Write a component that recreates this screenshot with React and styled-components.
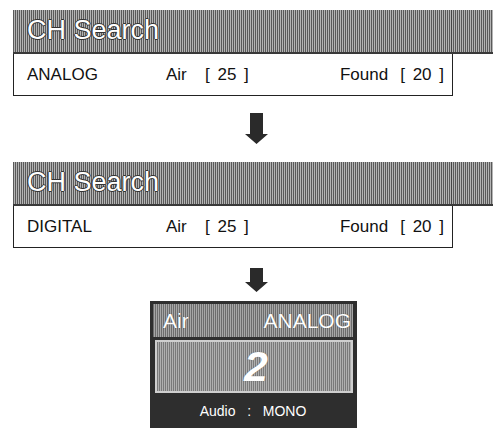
import React from 'react';
import styled, { createGlobalStyle } from 'styled-components';

const GlobalStyle = createGlobalStyle`
  html, body {
    margin: 0;
    padding: 0;
    background: #fff;
  }
  body {
    font-family: "Liberation Sans", Arial, sans-serif;
    color: #111;
  }
`;

const Page = styled.div`
  width: 493px;
  height: 428px;
  overflow: hidden;
  padding-top: 10px;
  box-sizing: border-box;
  display: flex;
  flex-direction: column;
`;

const Panel = styled.div`
  display: flex;
  flex-direction: column;
  padding-left: 13px;
`;

const Header = styled.div`
  display: flex;
  height: 42px;
  background: repeating-linear-gradient(90deg, #5a5a5a 0 1px, #b4b4b4 1px 2px);
  border-bottom: 2px solid #3a3a3a;
`;

const HeaderMain = styled.div`
  width: 439px;
  border-right: 1px solid #444;
  display: flex;
  align-items: center;
  padding-left: 14px;
  box-sizing: border-box;
`;

const HeaderTitle = styled.span`
  font-size: 27px;
  color: #fff;
  margin-top: -1px;
  text-shadow: 1px 0 0 #333, -1px 0 0 #333, 0 1px 0 #333, 0 -1px 0 #333;
`;

const Row = styled.div`
  width: 440px;
  height: 42px;
  box-sizing: border-box;
  border: 1.5px solid #222;
  border-top: none;
  display: flex;
  align-items: center;
  padding: 0 8px 0 13px;
  font-size: 17px;
  white-space: pre;
`;

const Mode = styled.span`
  width: 139px;
`;

const Label = styled.span`
  width: ${props => props.w}px;
`;

const Bracket = styled.span`
  word-spacing: 3px;
`;

const Spacer = styled.span`
  flex: 1;
`;

const Found = styled.span`
  margin-right: 12px;
`;

const ArrowRow = styled.div`
  display: flex;
  padding-left: 245px;
  margin-top: ${props => props.top}px;
  margin-bottom: ${props => props.bottom}px;
`;

const DisplayWrap = styled.div`
  display: flex;
  padding-left: 150px;
`;

const Display = styled.div`
  width: 207px;
  height: 130px;
  box-sizing: border-box;
  background: #2e2e2e;
  padding: 3px 4px 0 3px;
  display: flex;
  flex-direction: column;
`;

const DisplayTitle = styled.div`
  height: 33px;
  display: flex;
  justify-content: space-between;
  align-items: center;
  padding: 0 2px 0 10px;
  font-size: 21px;
  color: #fff;
  background: repeating-linear-gradient(90deg, #6c6c6c 0 1px, #a6a6a6 1px 2px);
  text-shadow: 0 0 1px #444;
`;

const Channel = styled.div`
  margin: 3px 0 0 2px;
  height: 53px;
  box-sizing: border-box;
  border: 2px solid #cfcfcf;
  background: repeating-linear-gradient(90deg, #7a7a7a 0 1px, #b0b0b0 1px 2px);
  display: flex;
  align-items: center;
  justify-content: center;
  padding-left: 4px;
  font-size: 43px;
  font-weight: bold;
  font-style: italic;
  color: #fff;
  text-shadow: 0 0 1px #555;
`;

const Audio = styled.div`
  flex: 1;
  display: flex;
  align-items: center;
  justify-content: center;
  padding-bottom: 2px;
  font-size: 14px;
  color: #fff;
  white-space: pre;
`;

const DownArrow = ({ h }) => (
  <svg width="24" height={h} viewBox={`0 0 24 ${h}`}>
    <path
      d={`M5 0 H18 V${h - 10} H23 L11.5 ${h} L0 ${h - 10} H5 Z`}
      fill="#2a2a2a"
    />
  </svg>
);

const SearchPanel = ({ mode }) => (
  <Panel>
    <Header>
      <HeaderMain>
        <HeaderTitle>CH Search</HeaderTitle>
      </HeaderMain>
    </Header>
    <Row>
      <Mode>{mode}</Mode>
      <Label w={39}>Air</Label>
      <Bracket>[ 25 ]</Bracket>
      <Spacer />
      <Found>Found</Found>
      <Bracket>[ 20 ]</Bracket>
    </Row>
  </Panel>
);

export default function App() {
  return (
    <Page>
      <GlobalStyle />
      <SearchPanel mode="ANALOG" />
      <ArrowRow top={17} bottom={18}>
        <DownArrow h={31} />
      </ArrowRow>
      <SearchPanel mode="DIGITAL" />
      <ArrowRow top={20} bottom={9}>
        <DownArrow h={24} />
      </ArrowRow>
      <DisplayWrap>
        <Display>
          <DisplayTitle>
            <span>Air</span>
            <span>ANALOG</span>
          </DisplayTitle>
          <Channel>2</Channel>
          <Audio>Audio   :   MONO</Audio>
        </Display>
      </DisplayWrap>
    </Page>
  );
}
